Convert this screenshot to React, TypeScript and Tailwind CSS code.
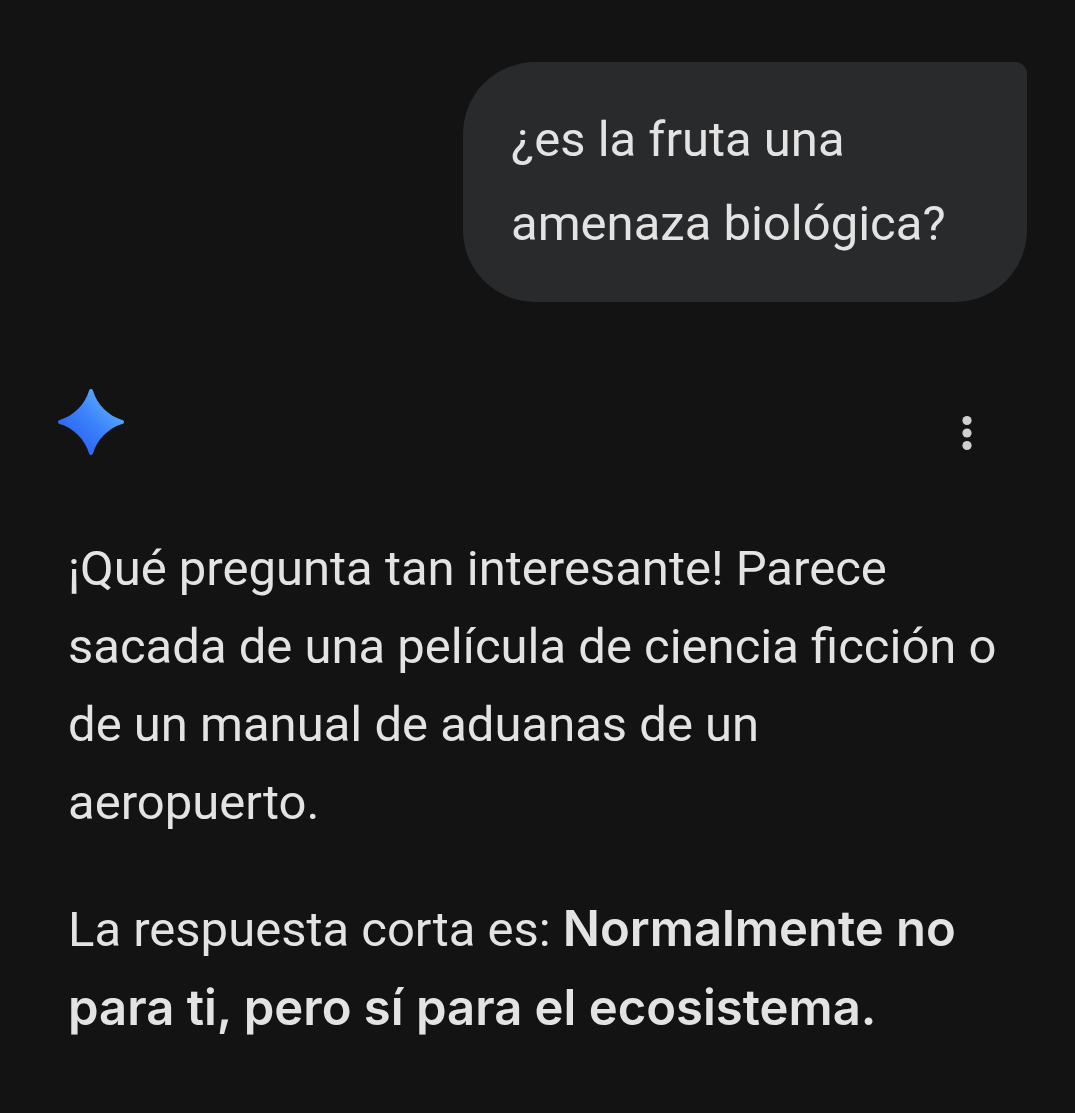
import React from 'react';

function SparkIcon() {
  return (
    <svg viewBox="0 0 68 68" className="w-[68px] h-[68px]" aria-hidden="true">
      <defs>
        <linearGradient id="spark" x1="14" y1="50" x2="50" y2="14" gradientUnits="userSpaceOnUse">
          <stop offset="0" stopColor="#2f66f3" />
          <stop offset="0.5" stopColor="#3a81fb" />
          <stop offset="1" stopColor="#56a4fb" />
        </linearGradient>
      </defs>
      <path
        fill="url(#spark)"
        d="M34 1C35 1 35.600 1.600 36 2.800C40 16.500 51.500 28 65.200 32C66.400 32.400 67 33 67 34C67 35 66.400 35.600 65.200 36C51.500 40 40 51.500 36 65.200C35.600 66.400 35 67 34 67C33 67 32.400 66.400 32 65.200C28 51.500 16.500 40 2.800 36C1.600 35.600 1 35 1 34C1 33 1.600 32.400 2.800 32C16.500 28 28 16.500 32 2.800C32.400 1.600 33 1 34 1Z"
      />
    </svg>
  );
}

function MoreIcon() {
  return (
    <svg viewBox="0 0 48 48" className="w-12 h-12" fill="currentColor" aria-hidden="true">
      <circle cx="24" cy="11.500" r="4.600" />
      <circle cx="24" cy="24" r="4.600" />
      <circle cx="24" cy="36.500" r="4.600" />
    </svg>
  );
}

function UserMessage({ children }: { children: React.ReactNode }) {
  return (
    <div className="flex justify-end px-12">
      <p className="max-w-[564px] rounded-[72px] rounded-tr-xl bg-[#292a2c] px-12 py-9 leading-[84px]">
        {children}
      </p>
    </div>
  );
}

export default function App() {
  return (
    <main className="min-h-screen bg-[#131313] pt-[62px] font-['Roboto',sans-serif] text-[49px] text-[#e3e3e3]">
      <UserMessage>¿es la fruta una amenaza biológica?</UserMessage>

      <article className="pt-[86px]">
        {/* Reply header */}
        <header className="flex items-start justify-between pl-[57px] pr-[84px]">
          <SparkIcon />
          <button type="button" aria-label="Más opciones" className="mt-[21px] text-[#cfcfcf]">
            <MoreIcon />
          </button>
        </header>

        {/* Reply text */}
        <div className="flex flex-col gap-12 pl-[68px] pr-16 pt-[73px] leading-[78px]">
          <p>
            ¡Qué pregunta tan interesante! Parece sacada de una película de ciencia ficción o de un
            manual de aduanas de un aeropuerto.
          </p>
          <p>
            La respuesta corta es:{' '}
            <strong className="font-['Inter',sans-serif] font-semibold">
              Normalmente no para ti, pero sí para el ecosistema.
            </strong>
          </p>
        </div>
      </article>
    </main>
  );
}
